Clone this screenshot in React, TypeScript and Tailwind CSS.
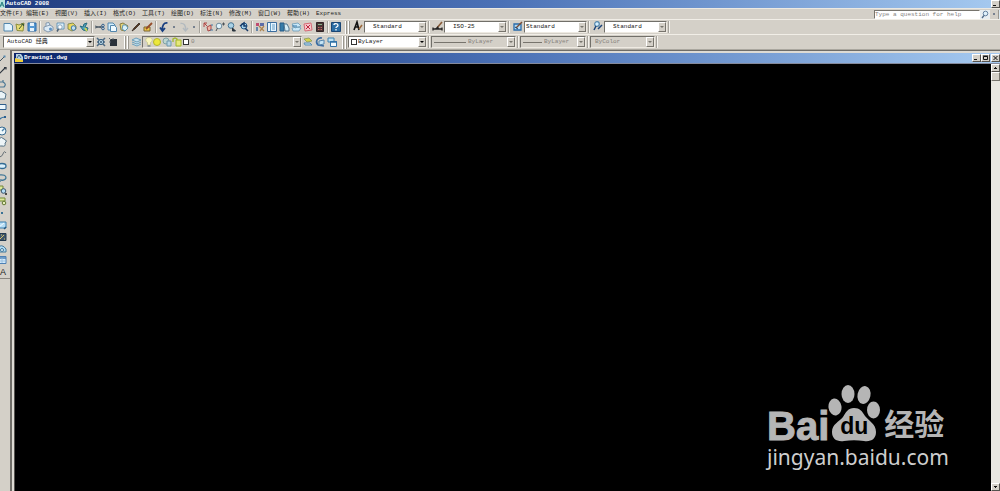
import type { ReactNode } from 'react'

const MENUS = ['文件(F)', '编辑(E)', '视图(V)', '插入(I)', '格式(O)', '工具(T)', '绘图(D)', '标注(N)', '修改(M)', '窗口(W)', '帮助(H)', 'Express']

const BLUE = '#5286ad'
const NAVY = '#1d4478'
const SKY = '#b5ddf5'
const GREEN = '#a4b82c'

// All glyphs are drawn on a 12x12 grid.
const GLYPHS: Record<string, ReactNode> = {
  New: <path d="M2 2.500h6l2.500 2v5.500H2z" fill="#e4f5ff" stroke={BLUE} />,
  Open: (
    <>
      <path d="M2 3l3 1 5-2-1 8-6-.5z" fill="#e9dd75" stroke="#8c8d3c" />
      <path d="M5 8l4-5M7 3h2.500v2" stroke="#3d5934" fill="none" />
    </>
  ),
  Save: (
    <>
      <path d="M2 2h8v8H2z" fill="#5799d3" stroke="#2c6aa7" />
      <path d="M4 2h4v3H4zM4 7h4v3H4z" fill="#e6f2fb" />
    </>
  ),
  Plot: (
    <>
      <path d="M4 5V2l3-.5 1 3M2 6l6-2 3 2v3l-5 2-4-2z" fill="#dceaf5" stroke="#7189a3" strokeWidth=".8" />
      <circle cx="8.500" cy="8" r="1.500" fill="#5d91c3" />
    </>
  ),
  Preview: (
    <>
      <path d="M3 2h7v6H3z" fill="#ddf1fc" stroke={BLUE} strokeWidth=".8" />
      <circle cx="6" cy="6" r="2.200" fill="#fff" stroke="#6f8da7" strokeWidth=".8" />
      <path d="M4.500 8L3 10.500" stroke="#4b5f73" strokeWidth="1.500" />
    </>
  ),
  Publish: (
    <>
      <path d="M2 3l5-1 3 3v3l-4 2-4-2z" fill="#ead75d" stroke="#6f7a45" strokeWidth=".8" />
      <circle cx="7.500" cy="7" r="2.300" fill="#bfe0f2" stroke="#3e74a5" />
    </>
  ),
  Web: (
    <>
      <path d="M2 5l3 4 4 1 1-3-3-1 2-4-3 1-1 3z" fill="#52a5bb" stroke="#286b82" />
      <path d="M7 7l2 3" stroke="#cbd453" strokeWidth="2" />
    </>
  ),
  Cut: (
    <>
      <path d="M1 5l7 2M1 7l7-2" stroke="#4d5a66" />
      <circle cx="9" cy="4.500" r="1.300" fill="none" stroke="#33618f" />
      <circle cx="9" cy="7.500" r="1.300" fill="none" stroke="#33618f" />
    </>
  ),
  Copy: (
    <>
      <path d="M2 2h5l2 2v5H2z" fill="#d2edfb" stroke={BLUE} />
      <path d="M4.500 4.500h4l2 2v4h-6z" fill="#eef9ff" stroke={BLUE} />
    </>
  ),
  Paste: (
    <>
      <path d="M2 3l3-1 5 3-3 5-4-1z" fill="#e4d37b" stroke="#897e42" />
      <path d="M5 4h3l2 3-3 3-3-2z" fill="#d9f0fa" stroke="#5e94b0" />
    </>
  ),
  Match: <path d="M2 10l2-3 5-5 1 1-5 5z" fill="#5c3c22" stroke="#322821" strokeWidth=".8" />,
  BlockEditor: (
    <>
      <path d="M2 6h6v4H2z" fill="#f2ca48" stroke="#7b6430" />
      <path d="M4 8l6-6" stroke="#954d2a" strokeWidth="1.800" />
    </>
  ),
  Undo: <path d="M9.500 2C6 1.500 4 4 4.500 9M2 6.500L4.500 10 7 7" fill="none" stroke="#173e80" strokeWidth="1.700" />,
  Redo: <path d="M2.500 2.500C6 2 8 4 7.500 9M5 7l2.500 3L10 7" fill="none" stroke="#b3babf" strokeWidth="1.400" />,
  Pan: (
    <>
      <path d="M2 2l3 3M2 6V2h3M5 6l4-2v5l-3 1z" fill="#f0b7a7" stroke="#a94948" />
      <path d="M9 4h2M8 9h3" stroke="#427ba5" />
    </>
  ),
  Zoom: (
    <>
      <circle cx="5" cy="5" r="2.800" fill="#e0f2fb" stroke="#718d9e" />
      <path d="M3.500 7L2 10M8 3h3M9.500 1.500v3" stroke="#4b5156" />
    </>
  ),
  ZoomWindow: (
    <>
      <circle cx="5" cy="4.500" r="2.800" fill="#a9d1e5" stroke="#467493" />
      <path d="M6.500 7l3 3h-3z" fill="#27323c" stroke="#27323c" />
    </>
  ),
  ZoomPrevious: (
    <>
      <circle cx="6" cy="5" r="3" fill="#a7d2eb" stroke="#245d8c" />
      <path d="M2 5l4-3v3h3M7 7l3 3" stroke="#173b69" strokeWidth="1.500" fill="none" />
    </>
  ),
  Properties: (
    <>
      <path d="M2 2h3v3H2z" fill="#c04b70" />
      <path d="M6 2h4v3H6z" fill="#5b6ca8" />
      <path d="M2 6h2v4H2z" fill="#6284a9" />
      <path d="M5 5l5 5M10 5L6 10" stroke="#ad8450" strokeWidth="1.300" />
    </>
  ),
  DesignCenter: (
    <>
      <path d="M1.500 1.500h9v9h-9z" fill="#e6f4ff" stroke="#3b6c9d" />
      <path d="M4.500 2v8M6 4h3M6 6h3M6 8h3" stroke="#629cc3" />
    </>
  ),
  ToolPalettes: (
    <>
      <path d="M2 2h4v8H2z" fill="#377ca8" stroke="#285d88" />
      <path d="M6 3h3l2 4v3H7z" fill="#d6edf7" stroke="#547890" />
    </>
  ),
  SheetSet: (
    <>
      <path d="M2 3l6-1 3 3-6 2zM2 7l5-1 4 1-2 3H3z" fill="#cbe8f7" stroke="#6a9bb8" strokeWidth=".8" />
      <path d="M2 5h5" stroke="#3176aa" />
    </>
  ),
  Markup: (
    <>
      <path d="M2 3l7-1 1 7-7 1z" fill="#f8c7cb" stroke="#d66b77" />
      <path d="M4 4l4 4M8 4L4 8" stroke="#bd2940" />
    </>
  ),
  Calculator: (
    <>
      <path d="M2.500 1.500h7v9h-7z" fill="#493334" stroke="#302526" />
      <path d="M4 3.500h4" stroke="#86b287" />
      <path d="M4 6.500h4M4 8.500h4" stroke="#c56864" strokeDasharray="1 .5" />
    </>
  ),
  Help: (
    <>
      <path d="M1.500 1.500h9v9h-9z" fill="#2c6da3" stroke="#1b4674" />
      <path d="M4 4c0-2 4-2 4 .3C8 6 6 5.500 6 7M6 8v1.500" fill="none" stroke="#fff" strokeWidth="1.300" />
    </>
  ),
  TextStyle: (
    <>
      <path d="M2 10l3-8 2 8M3 7h4" fill="none" stroke="#111" strokeWidth="1.600" />
      <path d="M7 9l3-4" stroke="#9a693c" strokeWidth="1.500" />
    </>
  ),
  DimStyle: (
    <>
      <path d="M1 9h9M1 7.500v3M10 7.500v3" stroke="#222" strokeWidth="1.300" />
      <path d="M5 8l5-6" stroke="#875a38" strokeWidth="1.600" />
      <path d="M3 9l3-3 1 3z" fill="#222" />
    </>
  ),
  TableStyle: (
    <>
      <path d="M2 4h7v6H2z" fill="#b4dcf5" stroke="#286baa" strokeWidth="1.300" />
      <path d="M4 8l6-6" stroke="#7b4d36" strokeWidth="1.500" />
      <path d="M3 7l3 2" stroke={NAVY} />
    </>
  ),
  LeaderStyle: (
    <>
      <circle cx="5" cy="4" r="2.300" fill="#d5efff" stroke={BLUE} strokeWidth="1.200" />
      <path d="M4 6l-2 4M6 9l4-4" stroke={NAVY} strokeWidth="1.500" />
    </>
  ),
  Gear: (
    <>
      <path d="M2 2l8 8M10 2l-8 8M2 6h8" stroke="#4d6982" strokeWidth="1.500" />
      <circle cx="6" cy="6" r="2.600" fill="#b7d5e5" stroke="#385d7c" />
      <circle cx="6" cy="6" r="1" fill="#395975" />
    </>
  ),
  Workspace: (
    <>
      <path d="M3 3h7v7H3z" fill="#29313a" />
      <path d="M2 2l2 2M2 6h2M6 2v2" stroke="#59656e" />
    </>
  ),
  Layers: <path d="M2 4l4-2 5 2-4 2zM2 6l5 2 4-2M2 8l5 2 4-2" fill="#c8e2ee" stroke="#6b9fbc" />,
  LayerPrevious: (
    <>
      <path d="M2 3l5-1 3 3-5 1z" fill="#d6d44d" stroke="#8c9b55" strokeWidth=".8" />
      <path d="M2 7h6l2 2H3z" fill="#c8e1ef" stroke="#568eb6" />
    </>
  ),
  LayerCurrent: (
    <>
      <path d="M8 2C3 1 1 6 4 9l6 1" fill="none" stroke="#3b6ca2" strokeWidth="1.600" />
      <path d="M5 5l5-1v4l-5 1z" fill="#c7e5f5" stroke="#5485ad" />
    </>
  ),
  LayerStates: (
    <>
      <path d="M2 2h6v4H2z" fill="#bce0f3" stroke="#3d82b0" />
      <path d="M4.500 5.500h6v5h-6z" fill="#f2fbff" stroke="#3173a8" />
      <path d="M4 6h7" stroke="#3173a8" strokeWidth="1.500" />
    </>
  ),
  Bulb: (
    <>
      <path d="M6 1.500c-4 0-4 4-1.500 5V9h3V6.500C10 5.500 10 1.500 6 1.500z" fill="#f9f6bd" stroke="#c6c58e" strokeWidth=".8" />
      <path d="M4.500 10h3" stroke="#566675" />
    </>
  ),
  Sun: <circle cx="6" cy="6" r="3.500" fill="#ede83b" stroke="#b3b62a" />,
  Freeze: (
    <>
      <circle cx="5" cy="5" r="3" fill="#bfd6cf" stroke="#7da1a5" />
      <path d="M6 5h4v5H6z" fill="#b8d5e3" stroke="#6f99b0" />
    </>
  ),
  Lock: (
    <>
      <path d="M2 6V3l2-1 2 1v3" fill="none" stroke={GREEN} strokeWidth="1.300" />
      <path d="M5 4h5v6H5z" fill="#e6e77a" stroke={GREEN} />
    </>
  ),
  Line: (
    <>
      <path d="M1 10l7-7" stroke="#42515d" />
      <path d="M7.500 1.500h2v2h-2z" fill={BLUE} />
    </>
  ),
  Ray: <path d="M1 10l8-8M8 1.500h2v2" stroke="#2f3740" strokeWidth="1.200" fill="none" />,
  Polyline: <path d="M2 4h5q4 2 1 5H3M7 4V2" fill="none" stroke="#4a7794" strokeWidth="1.200" />,
  Polygon: <path d="M1 5l4-3 5 3-1 5H2z" fill="#e9f3f7" stroke="#557489" />,
  Rectangle: <path d="M1 3.500h9v5H1z" fill="#edf7fc" stroke="#315f8b" />,
  Arc: (
    <>
      <path d="M2 9Q4 4 9 4" fill="none" stroke="#3470a0" strokeWidth="1.200" />
      <path d="M8 3h2v2H8z" fill="#2b5f90" />
    </>
  ),
  Circle: (
    <>
      <circle cx="6" cy="6" r="4" fill="#edf7fb" stroke="#3c6c90" />
      <path d="M6 6l3-3" stroke={BLUE} strokeWidth="1.400" />
    </>
  ),
  Cloud: <path d="M2 3q4-3 6 0 4 2 1 4 1 4-3 3-4 1-4-7z" fill="#edf5f8" stroke="#527084" />,
  Spline: <path d="M1 5q3 7 6 1 1-4 3-1" fill="none" stroke="#667077" />,
  Ellipse: <ellipse cx="6" cy="6" rx="4" ry="2.500" fill="#d9effa" stroke="#346c94" strokeWidth="1.300" />,
  EllipseArc: <path d="M3 3q7-1 7 3-1 3-5 2M4 7v3" fill="none" stroke="#417797" strokeWidth="1.300" />,
  InsertBlock: (
    <>
      <path d="M2 2h5v4H2z" fill="#dae89b" stroke="#74863a" />
      <circle cx="7.500" cy="7" r="2.300" fill={SKY} stroke="#38556c" />
      <path d="M9 10h2" stroke="#222" strokeWidth="1.500" />
    </>
  ),
  MakeBlock: (
    <>
      <path d="M3 3h6v3H3z" fill="#dce59a" stroke="#758c34" />
      <circle cx="8" cy="8" r="1.800" fill="#e9efbd" stroke="#617831" />
    </>
  ),
  Point: <path d="M5 5h2v2H5z" fill="#3a7295" />,
  Hatch: (
    <>
      <path d="M1 3h9v6H1z" fill={SKY} stroke="#3c7fae" />
      <path d="M3 8l5-4" stroke="#f4fbff" />
      <path d="M8 10l2-2" stroke="#24587f" strokeWidth="1.300" />
    </>
  ),
  Gradient: (
    <>
      <path d="M1 2.500h9v7H1z" fill="#3f566b" stroke="#243b51" />
      <path d="M4 8l4-4M5 4h1M8 8h1" stroke="#d8c36e" />
    </>
  ),
  Region: (
    <>
      <path d="M1 9V5q5-5 9 1v3z" fill={SKY} stroke="#43799b" />
      <circle cx="6" cy="7" r="1.500" fill="#f3fbff" stroke="#43799b" />
    </>
  ),
  Table: (
    <>
      <path d="M1 2.500h9v7H1z" fill="#d3e9fb" stroke="#4d80b5" />
      <path d="M1 4h9" stroke="#4d80b5" strokeWidth="1.500" />
      <path d="M1 7h9M6 4v5" stroke="#93b9dc" strokeWidth=".8" />
    </>
  ),
}

const STANDARD_GROUPS = [
  ['New', 'Open', 'Save'],
  ['Plot', 'Preview', 'Publish', 'Web'],
  ['Cut', 'Copy', 'Paste', 'Match', 'BlockEditor'],
  ['Undo', 'dot', 'Redo', 'dot'],
  ['Pan', 'Zoom', 'ZoomWindow', 'ZoomPrevious'],
  ['Properties', 'DesignCenter', 'ToolPalettes', 'SheetSet', 'Markup', 'Calculator'],
  ['Help'],
]

const STYLES = [
  { icon: 'TextStyle', value: 'Standard', indent: 'pl-2' },
  { icon: 'DimStyle', value: 'ISO-25', indent: 'pl-2' },
  { icon: 'TableStyle', value: 'Standard', indent: 'pl-px' },
  { icon: 'LeaderStyle', value: 'Standard', indent: 'pl-2' },
]

const DRAW_TOOLS = [
  'Line', 'Ray', 'Polyline', 'Polygon', 'Rectangle', 'Arc', 'Circle', 'Cloud', 'Spline', 'Ellipse',
  'EllipseArc', 'InsertBlock', 'MakeBlock', 'Point', 'Hatch', 'Gradient', 'Region', 'Table',
]

function Glyph({ name }: { name: string }) {
  return (
    <svg viewBox="0 0 12 12" className="size-3 shrink-0" fill="none" aria-hidden="true">
      {GLYPHS[name]}
    </svg>
  )
}

function Tool({ name }: { name: string }) {
  if (name === 'dot') {
    return (
      <button aria-label="History" className="flex h-3 w-2 shrink-0 items-center justify-center">
        <span className="size-0.5 rounded-full bg-[#58677c]" />
      </button>
    )
  }
  return (
    <button aria-label={name} className="size-3 shrink-0">
      <Glyph name={name} />
    </button>
  )
}

function Separator() {
  return <span className="mx-px h-3 w-0.5 shrink-0 border-l border-[#a5a29b] border-r border-r-[#f5f3ee]" />
}

function Grip() {
  return (
    <span className="mx-px flex h-[13px] shrink-0 gap-px">
      <span className="w-0.5 border-l border-white bg-[#9a978f]" />
      <span className="w-0.5 border-l border-white bg-[#9a978f]" />
    </span>
  )
}

type ComboProps = {
  label: string
  value: string
  width: string
  indent?: string
  disabled?: boolean
  strong?: boolean
  children?: ReactNode
}

function Combo({ label, value, width, indent = 'pl-px', disabled, strong, children }: ComboProps) {
  return (
    <div
      className={`flex h-3 shrink-0 items-center border border-[#716f69] border-r-[#eeeae2] border-b-[#eeeae2] ${width} ${
        disabled ? 'bg-[#d4d0c8] text-[#85827c]' : 'bg-white text-[#202020]'
      }`}
    >
      {children}
      <select
        aria-label={label}
        disabled={disabled}
        className={`h-[10px] min-w-0 flex-1 appearance-none bg-transparent leading-[10px] opacity-100 ${indent}`}
      >
        <option>{value}</option>
      </select>
      <span className="flex h-[10px] w-2 shrink-0 items-center justify-center border border-white border-r-[#77746d] border-b-[#77746d] bg-[#d4d0c8]">
        <svg viewBox="0 0 4 2" className={`h-0.5 w-1 ${strong ? 'text-black' : 'text-[#77746d]'}`} aria-hidden="true">
          <path d="M0 0h4L2 2z" fill="currentColor" />
        </svg>
      </span>
    </div>
  )
}

function WindowButton({ label, path }: { label: string; path: string }) {
  return (
    <button
      aria-label={label}
      className="flex h-2 w-[9px] shrink-0 items-center justify-center border border-white border-r-[#55534f] border-b-[#55534f] bg-[#d4d0c8]"
    >
      <svg viewBox="0 0 7 6" className="h-1.5 w-[7px]" aria-hidden="true">
        <path d={path} fill="none" stroke="#111" />
      </svg>
    </button>
  )
}

function Watermark() {
  return (
    <div className="absolute right-[46px] bottom-[20px] w-[178px] whitespace-nowrap text-[#b5b5b5]">
      <div className="flex h-[60px] items-end">
        <span className="font-['Liberation_Sans',sans-serif] text-[40px] leading-[34px] font-bold [-webkit-text-stroke:1px_#b5b5b5]">
          Bai
        </span>
        <span className="relative -ml-px h-[59px] w-[52px] shrink-0">
          <svg viewBox="0 0 52 58" className="h-[58px] w-[52px]" fill="currentColor" aria-hidden="true">
            <ellipse cx="7" cy="23" rx="6.500" ry="8.500" transform="rotate(-8 7 23)" />
            <ellipse cx="20" cy="10" rx="6.500" ry="9" />
            <ellipse cx="36" cy="11" rx="6.500" ry="9" transform="rotate(12 36 11)" />
            <ellipse cx="45.500" cy="26" rx="6.500" ry="8.500" />
            <path d="M26 24c-6 0-8 4-11 9-4 5-11 7-11 15 0 7 5 10 12 9 7-1 13-1 20 0 7 1 12-2 12-9 0-8-7-11-11-16-3-5-5-8-11-8z" />
          </svg>
          <span className="absolute inset-x-0 bottom-1 text-center font-['Liberation_Sans',sans-serif] text-[23px] leading-[26px] font-bold text-black">
            du
          </span>
        </span>
        <span className="ml-1 font-['Noto_Sans_CJK_SC',sans-serif] text-[30px] leading-[42px] font-bold">经验</span>
      </div>
      <div className="font-['Noto_Sans',sans-serif] text-[21px] leading-7 text-[#cecece]">jingyan.baidu.com</div>
    </div>
  )
}

export default function App() {
  return (
    <div className="flex h-screen flex-col overflow-hidden bg-[#d4d0c8] font-['Liberation_Mono','Noto_Sans_CJK_SC',monospace] text-[6px] leading-[8px] text-[#202020]">
      <header className="flex h-2 shrink-0 items-center justify-between overflow-hidden bg-linear-to-r from-[#203d80] via-[#4b71b6] to-[#a6caf0] font-bold text-white">
        <div className="flex items-center gap-px">
          <svg viewBox="0 0 5 8" className="h-2 w-[5px]" aria-hidden="true">
            <path d="M0 0h5v8H0z" fill="#b7e1dd" />
            <path d="M0 7l2-5 2 5M1 5h2" fill="none" stroke="#277f80" />
          </svg>
          <h1>AutoCAD 2008</h1>
        </div>
        <WindowButton label="Minimize application" path="M1 4.500h3" />
      </header>

      <nav className="flex h-[11px] shrink-0 items-center border-t border-[#ece9e2]">
        <div className="flex flex-1 gap-[6px] whitespace-nowrap">
          {MENUS.map((menu, i) => (
            <button key={menu} className={`shrink-0 text-left ${i === 0 ? 'w-5' : i === MENUS.length - 1 ? '' : 'w-[23px]'}`}>
              {menu}
            </button>
          ))}
        </div>
        <input
          aria-label="Help search"
          placeholder="Type a question for help"
          className="h-[9px] w-[106px] border border-[#77746d] border-r-white border-b-white bg-white leading-[7px] placeholder:text-[#85837f]"
        />
        <button aria-label="Search" className="h-[9px] w-2.5 bg-[#e8edf1]">
          <svg viewBox="0 0 10 9" className="h-[9px] w-2.5" aria-hidden="true">
            <circle cx="5.500" cy="3.500" r="2.300" fill="#dff0fb" stroke="#6581a0" />
            <path d="M4 5.500L2 8" stroke="#506b8a" strokeWidth="1.300" />
          </svg>
        </button>
        <Tool name="dot" />
        <span className="h-[9px] w-0.5 border-l border-[#9a978f] bg-[#dceaf3]" />
      </nav>

      <div className="flex h-[15px] shrink-0 items-center border-t border-[#f1eee7] pl-0.5">
        {STANDARD_GROUPS.map((group, i) => (
          <div key={group[0]} className="flex items-center">
            {i > 0 && <Separator />}
            {group.map((name, j) => (
              <Tool key={name + j} name={name} />
            ))}
          </div>
        ))}
        <div className="ml-0.5 flex items-center">
          <Grip />
          {STYLES.map((style, i) => (
            <div key={style.icon} className="flex items-center">
              {i > 0 && <Separator />}
              <span className="ml-px">
                <Tool name={style.icon} />
              </span>
              <Combo label={style.icon} value={style.value} width="w-[63px]" indent={style.indent} />
            </div>
          ))}
          <Separator />
        </div>
      </div>

      <div className="flex h-[15px] shrink-0 items-center border-t border-[#f1eee7] pl-[3px]">
        <Combo label="Workspace" value="AutoCAD 经典" width="w-[92px]" indent="pl-[3px]" strong />
        <div className="flex w-[28px] items-center">
          <Tool name="Gear" />
          <Tool name="Workspace" />
        </div>
        <div className="flex items-center">
          <Grip />
          <Tool name="Layers" />
          <Combo label="Layer" value="0" width="w-[160px]" disabled>
            <Glyph name="Bulb" />
            <span className="-ml-1 flex">
              <Glyph name="Sun" />
              <span className="-ml-0.5 flex">
                <Glyph name="Freeze" />
                <span className="-ml-0.5 flex">
                  <Glyph name="Lock" />
                </span>
              </span>
            </span>
            <span className="mr-px size-1.5 shrink-0 border border-[#333] bg-white" />
          </Combo>
          <Tool name="LayerPrevious" />
          <Tool name="LayerCurrent" />
          <Tool name="LayerStates" />
        </div>
        <div className="ml-[3px] flex items-center">
          <Grip />
          <Combo label="Color" value="ByLayer" width="w-[79px]" strong>
            <span className="ml-0.5 size-1.5 shrink-0 border border-[#333] bg-white" />
          </Combo>
          <Separator />
          <Combo label="Linetype" value="ByLayer" width="w-[85px]" indent="pl-0.5" disabled>
            <span className="ml-0.5 h-px w-8 shrink-0 bg-[#77746d]" />
          </Combo>
          <Separator />
          <Combo label="Lineweight" value="ByLayer" width="w-[66px]" indent="pl-0.5" disabled>
            <span className="ml-0.5 h-px w-[19px] shrink-0 bg-[#77746d]" />
          </Combo>
          <Separator />
          <Combo label="Plot style" value="ByColor" width="w-[65px]" indent="pl-1" disabled />
          <Separator />
        </div>
      </div>

      <div className="flex min-h-0 flex-1 border-t border-[#aaa79f]">
        <aside className="w-[10px] shrink-0 overflow-hidden">
          <div className="flex h-[229px] flex-col border-b border-[#8a8780] pt-1">
            {DRAW_TOOLS.map((name) => (
              <button key={name} aria-label={name} className="-ml-1 flex min-h-0 flex-1 items-center">
                <Glyph name={name} />
              </button>
            ))}
            <button aria-label="Multiline text" className="min-h-0 flex-1 text-left font-['Liberation_Sans',sans-serif] text-[9px] leading-3">
              A
            </button>
          </div>
        </aside>

        <main className="flex min-w-0 flex-1 flex-col border-t border-l-2 border-[#6e6c67]">
          <div className="flex min-h-0 flex-1 flex-col border-t-2 border-l-2 border-[#dedbd4]">
            <div className="flex h-[11px] shrink-0 items-center justify-between border-b border-[#858a9b] bg-linear-to-r from-[#0a246a] via-[#4b71b6] to-[#a6caf0] font-bold text-white">
              <div className="flex items-center">
                <svg viewBox="0 0 10 10" className="size-2.5" aria-hidden="true">
                  <path d="M2 1h5l2 3v5H2z" fill="#b5cde0" />
                  <path d="M1 9V5l3 1 5 1v2z" fill="#f0cf38" />
                  <path d="M3 5l2-3 2 3" fill="none" stroke="#39678d" />
                </svg>
                <h2>Drawing1.dwg</h2>
              </div>
              <div className="flex">
                <WindowButton label="Minimize" path="M1 4.500h3" />
                <WindowButton label="Restore" path="M1.500 1.500h4v3h-4zM1 1h5" />
                <span className="ml-px">
                  <WindowButton label="Close" path="M1.500 1l4 4M5.500 1l-4 4" />
                </span>
              </div>
            </div>

            <div className="flex min-h-0 flex-1">
              <div className="relative min-w-0 flex-1 border-l border-[#55534f] bg-black">
                <Watermark />
              </div>
              <div className="flex w-[9px] shrink-0 flex-col bg-[#e9e7e1]">
                <WindowButton label="Scroll up" path="M2 3.500h3M3 2.500h1" />
                <span className="h-[9px] border border-white border-r-[#77746d] border-b-[#77746d] bg-[#d4d0c8]" />
                <span className="flex-1" />
                <WindowButton label="Scroll down" path="M2 2.500h3M3 3.500h1" />
              </div>
            </div>
          </div>
        </main>
      </div>
    </div>
  )
}
